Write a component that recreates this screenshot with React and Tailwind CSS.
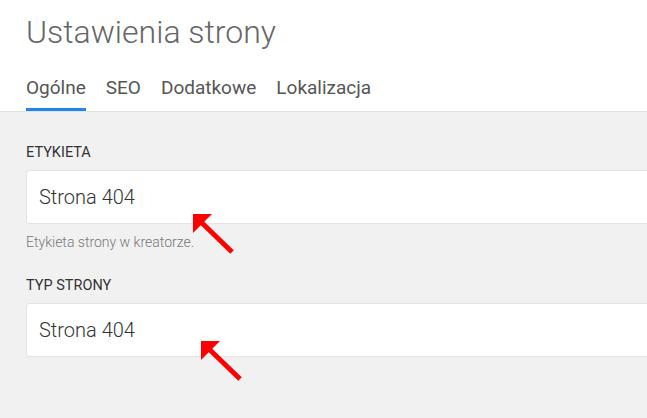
const tabs = ["Ogólne", "SEO", "Dodatkowe", "Lokalizacja"];

const Arrow = ({ x, y }) => (
    <svg
        className="absolute pointer-events-none"
        style={{ left: x, top: y }}
        width="50"
        height="50"
        viewBox="0 0 50 50"
    >
        <polygon points="0,0 19,0 0,19" fill="#ff0000" />
        <line x1="8" y1="8" x2="39" y2="38" stroke="#ff0000" strokeWidth="5" />
    </svg>
);

const Field = ({ label, value, hint }) => (
    <div className="flex flex-col">
        <label className="text-[14.5px] leading-4 uppercase text-[#333]">{label}</label>
        <div className="mt-[9px] -mr-2 h-[54px] flex items-center bg-white border border-[#e4e4e4] rounded-[3px] pl-[12px]">
            <span className="text-[20px] font-light text-[#333]">{value}</span>
        </div>
        {hint && <p className="mt-[10px] text-[14px] leading-4 font-light text-[#777]">{hint}</p>}
    </div>
);

export default function App() {
    return (
        <div className="relative w-[647px] h-[418px] overflow-hidden bg-[#f1f1f1] font-['Roboto',sans-serif]">
            <div className="bg-white border-b border-[#e2e2e2] px-[26px]">
                <h1 className="pt-[12px] text-[32px] leading-10 font-light text-[#666]">Ustawienia strony</h1>
                <div className="mt-[25px] flex gap-[20px]">
                    {tabs.map((t, i) => (
                        <div
                            key={t}
                            className={
                                i === 0
                                    ? "pb-[9px] border-b-[3px] border-[#2187ea] text-[19px] leading-[22px] text-[#555]"
                                    : "pb-[9px] border-b-[3px] border-transparent text-[19px] leading-[22px] text-[#555]"
                            }
                        >
                            {t}
                        </div>
                    ))}
                </div>
            </div>
            <div className="pl-[26px] pt-[33px] flex flex-col gap-[28px]">
                <Field label="Etykieta" value="Strona 404" hint="Etykieta strony w kreatorze." />
                <Field label="Typ strony" value="Strona 404" />
            </div>
            <Arrow x={193} y={214} />
            <Arrow x={201} y={341} />
        </div>
    );
}
